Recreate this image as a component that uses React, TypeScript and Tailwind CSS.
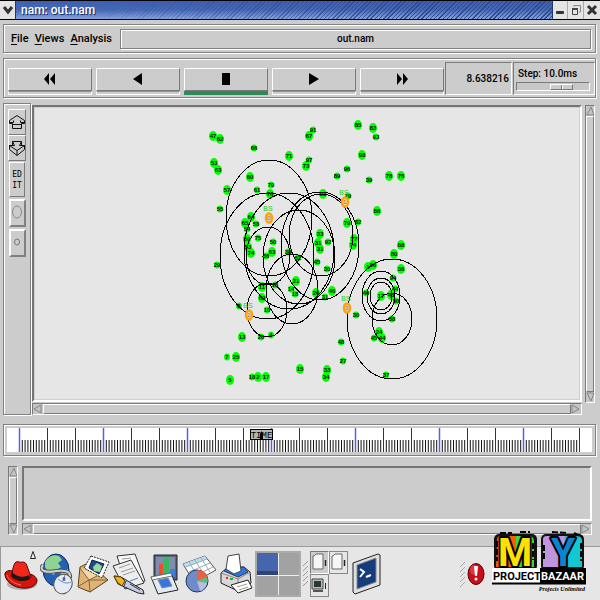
import React from 'react';
import { clsx } from 'clsx';

const groove = 'border border-[#808080] shadow-[inset_1px_1px_0_#fff,1px_1px_0_#fff]';
const raised = 'border border-t-white border-l-white border-b-[#7a7a7a] border-r-[#7a7a7a]';
const sunken = 'border border-t-[#7a7a7a] border-l-[#7a7a7a] border-b-white border-r-white';

type Node = [label: string, x: number, y: number, small?: boolean];

const NODES: Node[] = [
    ['47', 213, 136], ['62', 220, 139], ['66', 254, 148, true], ['91', 313, 130, true], ['67', 309, 136],
    ['71', 289, 156], ['53', 214, 163], ['63', 218, 170], ['97', 309, 160, true], ['73', 306, 166],
    ['60', 250, 177], ['61', 257, 190, true], ['70', 271, 185, true], ['76', 270, 194], ['57', 227, 190],
    ['55', 220, 209, true], ['64', 251, 217], ['65', 245, 223], ['54', 247, 229, true], ['58', 256, 224, true],
    ['75', 258, 238, true], ['59', 247, 239], ['53', 248, 247], ['50', 273, 242, true], ['93', 323, 194],
    ['33', 320, 234], ['31', 318, 243], ['92', 328, 242, true], ['31', 320, 249],
    ['85', 358, 125], ['83', 373, 128], ['93', 376, 137, true], ['98', 362, 155], ['96', 347, 169, true],
    ['89', 337, 176, true], ['39', 369, 180, true], ['78', 389, 176], ['76', 401, 176], ['86', 377, 211],
    ['79', 348, 196, true], ['79', 347, 223], ['82', 358, 222, true], ['77', 354, 239], ['74', 353, 245],
    ['88', 401, 245], ['74', 251, 253], ['36', 266, 256, true], ['63', 272, 252], ['38', 288, 252, true],
    ['52', 298, 258, true], ['45', 317, 262, true], ['30', 327, 269, true], ['29', 217, 265, true], ['11', 262, 287],
    ['16', 275, 285, true], ['21', 296, 281], ['14', 291, 289, true], ['18', 295, 294, true], ['69', 262, 298],
    ['10', 267, 310, true], ['8', 239, 306, true], ['26', 316, 293], ['31', 325, 297, true], ['46', 332, 291],
    ['13', 242, 337], ['20', 261, 337, true], ['4', 271, 335, true], ['7', 227, 357, true], ['25', 236, 357],
    ['5', 230, 380], ['18', 252, 377, true], ['2', 258, 377], ['17', 266, 377], ['15', 300, 369],
    ['33', 327, 370], ['34', 326, 377], ['80', 394, 254], ['36', 401, 269], ['1', 368, 267],
    ['56', 373, 265], ['94', 393, 278, true], ['40', 366, 293, true], ['17', 381, 296], ['44', 395, 289, true],
    ['48', 391, 295], ['50', 396, 301, true], ['38', 392, 319, true], ['45', 374, 338, true], ['24', 379, 332],
    ['44', 382, 338], ['30', 356, 315, true], ['48', 341, 342, true], ['27', 343, 361, true], ['37', 386, 375, true],
];

// cx, cy, rx, ry
const RANGES = [
    [269, 218, 43, 58], [267, 256, 47, 63], [289, 251, 45, 58], [299, 257, 36, 47], [320, 246, 39, 54],
    [321, 235, 32, 41], [268, 256, 22, 29], [267, 310, 20, 27], [292, 289, 26, 35], [392, 319, 45, 60],
    [392, 319, 20, 26], [381, 296, 19, 25], [381, 296, 14, 18], [381, 296, 11, 14],
];

const STATIONS = [
    ['0', 269, 218], ['1', 345, 202], ['2', 249, 315], ['3', 347, 308],
] as const;

const Network = () => (
    <svg viewBox="35 108 544 291" className="block h-[291px] w-full font-['Liberation_Sans',sans-serif]" role="img" aria-label="Network topology">
        {NODES.map(([label, x, y, small], i) => (
            <ellipse key={label + i} cx={x} cy={y} rx={small ? 3 : 4} ry={small ? 3.5 : 5} fill="#00ff00" />
        ))}
        <g fill="none" stroke="#000" shapeRendering="crispEdges">
            {RANGES.map(([cx, cy, rx, ry], i) => (
                <ellipse key={i} cx={cx} cy={cy} rx={rx} ry={ry} />
            ))}
        </g>
        {NODES.map(([label, x, y], i) => (
            <text key={label + i} x={x} y={y + 2} textAnchor="middle" fontSize="6" fontWeight="700" fill="#001a00">{label}</text>
        ))}
        {STATIONS.map(([label, x, y]) => (
            <g key={label} textAnchor="middle">
                <ellipse cx={x} cy={y} rx="3" ry="4.5" fill="#e6dcc8" stroke="#ffa010" strokeWidth="2.5" />
                <text x={x} y={y + 2} fontSize="6" fill="#c06000">{label}</text>
                <text x={x - 1} y={y - 7} fontSize="7" fill="#22cc22">BS</text>
            </g>
        ))}
    </svg>
);

const Ruler = () => (
    <svg viewBox="7 428 585 24" className="block h-6 w-full bg-white" role="img" aria-label="Time line">
        {Array.from({ length: 199 }, (_, i) => (
            <path key={i} d={`M${22.3 + i * 2.8} 440v12`} stroke="#111" strokeWidth="1" />
        ))}
        {Array.from({ length: 21 }, (_, i) => (
            <path key={i} d={`M${19.5 + i * 28} 428v24`} stroke={i % 3 ? '#1c1cff' : '#5858ff'} strokeWidth={i % 3 ? 1 : 1.5} />
        ))}
        <rect x="250.5" y="429.5" width="22" height="10" fill="#b4b8b0" stroke="#000" />
        <path d="M260 440v-6l1.500-3 1.500 3v6z" />
        <text x="261.5" y="438" textAnchor="middle" fontSize="9" className="font-['Liberation_Mono',monospace]">TIME</text>
    </svg>
);

const Arrow = ({ d, label }: { d: string; label: string }) => (
    <button aria-label={label} className="flex size-2.5 shrink-0 items-center justify-center">
        <svg viewBox="0 0 10 10" className="size-2.5">
            <path d={d} fill="#c4c4c4" stroke="#858585" />
        </svg>
    </button>
);

const VScroll = ({ className }: { className?: string }) => (
    <div className={clsx('flex w-[10px] shrink-0 flex-col bg-[#c4c4c4]', sunken, className)}>
        <Arrow label="Scroll up" d="M5 1l3 8H1z" />
        <div className={clsx('flex-1 bg-[#cccccc]', raised)} />
        <Arrow label="Scroll down" d="M1 1h7L5 9z" />
    </div>
);

const HScroll = () => (
    <div className={clsx('flex h-3 items-stretch bg-[#c4c4c4]', sunken)}>
        <Arrow label="Scroll left" d="M8 1v8L1 5z" />
        <div className={clsx('flex-1 bg-[#cccccc]', raised)} />
        <Arrow label="Scroll right" d="M1 1v8l7-4z" />
    </div>
);

const TRANSPORT = [
    { label: 'Rewind', d: 'M5 0v12L0 6zM11 0v12L6 6z' },
    { label: 'Play backward', d: 'M10 0v12L1 6z' },
    { label: 'Stop', d: 'M2 0h8v12H2z' },
    { label: 'Play forward', d: 'M1 0v12l10-6z' },
    { label: 'Fast forward', d: 'M1 0v12l5-6zM7 0v12l5-6z' },
];

const TitleBar = () => (
    <header className="flex h-5 border-y border-black bg-[#e4e4e4]">
        <button aria-label="Window menu" className="flex w-4 items-center justify-center border-r border-[#1f3770]">
            <svg viewBox="0 0 12 12" className="size-3"><path d="M2 3l4 5 4-5" fill="none" stroke="#333" strokeWidth="3" /></svg>
        </button>
        <div className="relative flex flex-1 items-center bg-linear-to-b from-[#3d60b4] via-[#4868b4] to-[#86a4e2] pl-[5px]">
            <div className="absolute inset-0 mask-[linear-gradient(to_right,transparent_10%,#000_75%)] bg-[repeating-linear-gradient(135deg,transparent_0_2px,#2c4a90_2px_3px)]" />
            <h1 className="relative text-[12px] leading-4 font-medium text-white [text-shadow:1px_1px_0_#1c2f60]">nam: out.nam</h1>
        </div>
        <div className="flex divide-x divide-[#aaa] border-l border-[#1f3770]">
            <button aria-label="Minimize" className="flex w-[15px] items-center justify-center">
                <svg viewBox="0 0 12 12" className="size-3"><rect x="2" y="7" width="8" height="3" rx="1" fill="#333" /></svg>
            </button>
            <button aria-label="Restore" className="flex w-4 items-center justify-center">
                <svg viewBox="0 0 12 12" className="size-3" fill="none" stroke="#444"><path d="M4 3V1.500h6.500V8H9" stroke="#888" /><path d="M2.500 4.500h5v6h-5z" /><path d="M2 5h6" strokeWidth="2" /></svg>
            </button>
            <button aria-label="Close" className="flex w-4 items-center justify-center">
                <svg viewBox="0 0 12 12" className="size-3"><path d="M2 2l8 8M10 2l-8 8" stroke="#333" strokeWidth="3" /></svg>
            </button>
        </div>
    </header>
);

const MenuBar = () => (
    <nav className={clsx('flex h-[29px] items-center gap-2 py-1 pr-1 pl-[7px]', groove)}>
        <div className="flex w-[101px] shrink-0 justify-between">
            {['File', 'Views', 'Analysis'].map((name) => (
                <button key={name} className="text-[11px] leading-4 font-medium">
                    <span className="underline underline-offset-2">{name[0]}</span>{name.slice(1)}
                </button>
            ))}
        </div>
        <div className={clsx('flex h-5 flex-1 items-center justify-center text-[10px] font-medium', groove)}>out.nam</div>
    </nav>
);

const Toolbar = () => (
    <section className={clsx('flex h-10 items-stretch pl-1', groove)}>
        <div className="flex flex-1 gap-1 pt-[6px]">
            {TRANSPORT.map(({ label, d }) => (
                <button key={label} aria-label={label} className="flex-1">
                    <span className={clsx('flex h-[23px] items-center justify-center', raised)}>
                        <svg viewBox="0 0 12 12" className="size-3"><path d={d} /></svg>
                    </span>
                    <span className={clsx('block h-1 border', label === 'Stop' ? 'border-[#2e8b57] bg-[#2e8b57]' : 'border-t-[#909090] border-r-white border-b-white border-l-white')} />
                </button>
            ))}
        </div>
        <output className={clsx('mt-[3px] mb-[2px] ml-px flex w-[67px] items-center justify-end pr-[2px] text-[10px] font-medium', sunken)}>8.638216</output>
        <div className={clsx('mt-[3px] mb-[2px] ml-px w-[82px] pt-[3px] pr-1 pl-[2px]', sunken)}>
            <label htmlFor="step" className="block pl-[2px] text-[10px] leading-4 font-medium">Step: 10.0ms</label>
            <input
                id="step"
                type="range"
                defaultValue={67}
                className={clsx(
                    'block h-[9px] w-full appearance-none bg-[#c8c8c8] [&::-webkit-slider-thumb]:h-[6px] [&::-webkit-slider-thumb]:w-[23px] [&::-webkit-slider-thumb]:appearance-none [&::-webkit-slider-thumb]:border [&::-webkit-slider-thumb]:border-t-white [&::-webkit-slider-thumb]:border-r-[#777] [&::-webkit-slider-thumb]:border-b-[#777] [&::-webkit-slider-thumb]:border-l-white [&::-webkit-slider-thumb]:bg-[linear-gradient(90deg,#ccc_10px,#777_10px_11px,#fff_11px_12px,#ccc_12px)]',
                    sunken
                )}
            />
        </div>
    </section>
);

const SideBar = () => (
    <aside className={clsx('flex w-[28px] shrink-0 flex-col items-center pt-[5px]', groove)}>
        <button aria-label="Zoom in" className={clsx('h-[26px] w-[18px]', raised)}>
            <svg viewBox="0 0 16 24" className="h-6 w-4" fill="none" stroke="#111"><path d="M8 5.500L.5 10.500v3h3v5h9v-5h3v-3zM.5 12.500h4v-2M15.500 12.500h-4v-2M3.500 14.500h9" /></svg>
        </button>
        <button aria-label="Zoom out" className={clsx('h-[26px] w-[18px]', raised)}>
            <svg viewBox="0 0 16 24" className="h-6 w-4" fill="none" stroke="#111"><path d="M3.500 5.500h9v4h3v4L8 19.500.5 13.500v-4h3zM3.500 5.500l2 4H.5l7.500 5 7.500-5h-5l2-4M8 14.500v5" /></svg>
        </button>
        <button className={clsx("mt-px h-[35px] w-4 font-['DejaVu_Sans_Mono',monospace] text-[8px] leading-[11px]", raised)}>ED<br />IT</button>
        <button aria-label="Larger nodes" className="mt-[2px] h-7 w-[17px] border-2 border-t-white border-r-[#808080] border-b-[#808080] border-l-white">
            <svg viewBox="0 0 13 24" className="h-6 w-[13px]"><ellipse cx="6" cy="11" rx="4.500" ry="6" fill="none" stroke="#888" /></svg>
        </button>
        <button aria-label="Smaller nodes" className="mt-[2px] h-7 w-[17px] border-2 border-t-white border-r-[#808080] border-b-[#808080] border-l-white">
            <svg viewBox="0 0 13 24" className="h-6 w-[13px]"><ellipse cx="6" cy="11" rx="2.500" ry="3" fill="none" stroke="#777" /></svg>
        </button>
    </aside>
);

const HatIcon = () => (
    <svg viewBox="0 0 34 34" className="size-[34px]">
        <ellipse cx="18" cy="27" rx="15" ry="6" fill="#777" opacity=".5" />
        <path d="M1 16c-1 6 6 14 17 15 9 1 15-3 15-8-1-4-5-6-9-6L9 14c-4-1-7 0-8 2z" fill="#d8140c" stroke="#4a0000" />
        <path d="M7 19c2-5 2-12 5-14 3-1 4 1 6 0 3 0 4 1 5 4l4 11c-4 5-16 5-20-1z" fill="#f0281c" stroke="#6a0000" />
        <path d="M8 15c4 5 12 6 17 3l1 4c-5 3-14 2-19-3z" fill="#181818" />
        <path d="M3 18c1 5 8 9 14 10" fill="none" stroke="#ff7a6a" />
    </svg>
);

const GlobeIcon = () => (
    <svg viewBox="0 0 34 42" className="h-[42px] w-[34px]">
        <ellipse cx="16" cy="17" rx="13" ry="16" fill="#2261b4" stroke="#0b2a5e" />
        <path d="M5 9c3-6 9-8 14-6l3 4-4 3 3 4-5 3-2 5-5-2-4-6zM22 19l6-3c0 6-2 9-5 12l-4-5z" fill="#8fd394" />
        <path d="M3 12c-5 6 4 8 13 6 9-1 15 0 14 7" fill="none" stroke="#555" strokeWidth="4" />
        <path d="M3 12c-5 6 4 8 13 6 9-1 15 0 14 7" fill="none" stroke="#d0d0d0" strokeWidth="2" />
        <ellipse cx="23" cy="31" rx="9" ry="10" fill="#e6eaf5" stroke="#555" transform="rotate(24 23 31)" />
        <path d="M18 26c5 4 9 5 13 3M25 22l-2 6" fill="none" stroke="#7a86a6" />
        <ellipse cx="24" cy="26" rx="1.500" ry="2" fill="#4668b0" />
    </svg>
);

const MailIcon = () => (
    <svg viewBox="0 0 34 40" className="h-10 w-[34px]">
        <path d="M4 13l8-4 20 17-18 12L2 33z" fill="#dcb478" stroke="#5a4010" />
        <path d="M3 32l10-6 18 0M14 38l-1-12" fill="none" stroke="#8a6428" />
        <path d="M4 14l9 12 10-5" fill="#f2d8a8" stroke="#8a6428" />
        <path d="M15 2l18 6-7 16L8 14z" fill="#fff" stroke="#222" strokeDasharray="2 1" />
        <path d="M16 6l12 4-5 10-10-6z" fill="#1c4c88" stroke="#0a2448" />
        <path d="M21 9l5 3-2 6-6-1-1-4z" fill="#98d8a0" />
    </svg>
);

const WriterIcon = () => (
    <svg viewBox="0 0 36 42" className="h-[42px] w-9">
        <path d="M5 3l18-2 10 27-19 3z" fill="#f8f8f8" stroke="#333" />
        <path d="M1 13l18-6 13 23-19 6z" fill="#eee" stroke="#333" />
        <path d="M7 15l11-4M9 19l12-4M11 22l12-4M10 6l9-1" stroke="#999" />
        <path d="M18 28l8-3" stroke="#5a78c8" />
        <path d="M2 23l7 1 22 13 1 4-6-1L6 31z" fill="#c8cce0" stroke="#222" />
        <path d="M2 23l7 1 4 4-3 5-5-4z" fill="#f0b418" stroke="#553c00" />
        <path d="M14 28l-2 5M18 31l10 6" stroke="#334" />
    </svg>
);

const ImpressIcon = () => (
    <svg viewBox="0 0 30 42" className="h-[42px] w-[30px]">
        <path d="M4 2h23v25H4z" fill="#5a6484" stroke="#222" />
        <path d="M6 4h19v20H6z" fill="#7f8cae" />
        <path d="M9 11h4v12H9z" fill="#f04c28" /><path d="M14 5h5v18h-5z" fill="#35b860" /><path d="M20 16h5v8h-5z" fill="#3a80e0" />
        <path d="M1 24l20-4 7 17-20 4z" fill="#e4e8f0" stroke="#222" />
        <path d="M8 27l10-2 4 8-10 2z" fill="#2e78e0" stroke="#88a" />
        <path d="M1 24l20-4 1 3-20 4z" fill="#fff" stroke="#777" />
    </svg>
);

const CalcIcon = () => (
    <svg viewBox="0 0 35 40" className="h-10 w-[35px]">
        <path d="M1 10l22-8 11 14-22 12z" fill="#fff" stroke="#555" />
        <path d="M1 10l22-8 2 3L4 13z" fill="#b8dcf0" />
        <path d="M4 13l21-8M7 18l21-9M10 23l21-10M7 8l9 15M13 6l9 15M19 4l9 14" stroke="#9aabb8" fill="none" />
        <ellipse cx="15" cy="27" rx="11" ry="11" fill="#6e8cc8" stroke="#223860" />
        <path d="M15 27V16c6 0 9 3 10 7z" fill="#f06040" /><path d="M15 27l10-4c1 2 1 4 0 6z" fill="#58c070" />
        <path d="M15 27l10 2c-1 4-4 8-7 8z" fill="#b8bce0" />
    </svg>
);

const PrinterIcon = () => (
    <svg viewBox="0 0 34 42" className="h-[42px] w-[34px]">
        <path d="M2 20l6-5 17-1 6 5 1 11-11 9-19-9z" fill="#d8d8d8" stroke="#222" />
        <path d="M5 18l3-3 17-1 4 5-10 5z" fill="#2878e8" stroke="#335" />
        <path d="M9 3l11-2 2 17-7 3-8-5z" fill="#fff" stroke="#444" />
        <path d="M2 20l17 6 12-7M19 26v11" fill="none" stroke="#888" />
        <path d="M12 32l17-5 4 8-14 5z" fill="#fff" stroke="#222" />
        <path d="M18 34l10-3M20 37l9-3" stroke="#999" /><path d="M11 26h3" stroke="#2a2" strokeWidth="2" /><path d="M7 25h2" stroke="#e22" strokeWidth="2" />
    </svg>
);

const Grip = () => (
    <svg viewBox="0 0 5 44" className="h-11 w-[5px] shrink-0">
        {[8, 13, 18, 23, 28].map((y) => <path key={y} d={`M0 ${y + 6}l5-5`} stroke="#999" />)}
    </svg>
);

const PageIcon = () => (
    <svg viewBox="0 0 16 20" className="h-5 w-4">
        <path d="M3 4l2-2h7v15H2V4z" fill="#f6f6f6" stroke="#666" /><path d="M14.500 8v6" stroke="#222" strokeWidth="1.500" />
    </svg>
);

const APPS = [
    { label: 'Main menu', Icon: HatIcon }, { label: 'Web browser', Icon: GlobeIcon }, { label: 'Email', Icon: MailIcon },
    { label: 'Writer', Icon: WriterIcon }, { label: 'Impress', Icon: ImpressIcon }, { label: 'Calc', Icon: CalcIcon },
    { label: 'Print manager', Icon: PrinterIcon },
];

const Logo = () => (
    <svg viewBox="0 0 96 64" className="absolute right-3 bottom-[5px] z-10 h-16 w-24 overflow-visible font-[Roboto,sans-serif] font-bold" role="img" aria-label="My Project Bazaar, Projects Unlimited">
        <rect x="2" y="3" width="43" height="37" rx="5" fill="#111" />
        <rect x="49" y="3" width="43" height="37" rx="5" fill="#111" />
        <path d="M5 8q0-3 4-3h15v31H4z" fill="#ff5a00" /><path d="M24 5h12q6 0 6 5v26H24z" fill="#3ad83a" />
        <path d="M51 8q0-3 4-3h18v31H51z" fill="#bf95e0" /><path d="M73 5h12q5 0 5 5v26H70z" fill="#10c8d0" />
        <path d="M5 10v20M89 12v18M41 12v17M52 14v15M8 2h12M28 1h10M60 1l16 1M82 2l8 4" stroke="#000" strokeWidth="2" strokeDasharray="6 2" fill="none" />
        <g fontSize="39" textAnchor="middle" stroke="#000" strokeWidth="4" paintOrder="stroke" strokeLinejoin="round">
            <text x="23" y="35" fill="#ffe000">M</text>
            <text x="71" y="35" fill="#0a84d0">Y</text>
        </g>
        <rect x="0" y="37" width="48" height="15" fill="#fff" /><rect x="48" y="37" width="46" height="16" fill="#000" />
        <path d="M0 52.500h94" stroke="#000" strokeWidth="2" />
        <text x="1" y="49" fontSize="11">PROJECT</text>
        <text x="92" y="49" fontSize="11" textAnchor="end" fill="#fff">BAZAAR</text>
        <text x="93" y="60" fontSize="6" textAnchor="end" fontStyle="italic" className="font-['Liberation_Serif',serif]">Projects Unlimited</text>
    </svg>
);

const TaskBar = () => (
    <footer className="relative flex h-[54px] items-center border-t border-l border-[#999] bg-[#e6e6e6] pr-[13px] pl-[3px]">
        <div className="flex items-center gap-[2px]">
            {APPS.map(({ label, Icon }) => <button key={label} aria-label={label}><Icon /></button>)}
        </div>
        <svg viewBox="0 0 8 8" className="absolute top-1 left-7 size-2"><path d="M4 .5L1.500 7.500h5z" fill="#eee" stroke="#222" /></svg>
        <div className="ml-[2px] grid h-[46px] w-[46px] shrink-0 grid-cols-2 gap-px border-2 border-[#aaa] bg-[#eee]">
            <button aria-label="Workspace 1" className="border-b-4 border-[#2f4474] bg-[#4565ad]" />
            <button aria-label="Workspace 2" className="bg-[#a2a2a2]" />
            <button aria-label="Workspace 3" className="bg-[#a2a2a2]" />
            <button aria-label="Workspace 4" className="bg-[#a2a2a2]" />
        </div>
        <div className="ml-[2px]"><Grip /></div>
        <div className="ml-[2px] grid shrink-0 grid-cols-2">
            <button aria-label="Window 1" className={clsx('h-[23px] w-[19px] bg-[#ccc]', sunken)}><PageIcon /></button>
            <button aria-label="Window 2" className="h-[23px] w-[19px] border border-[#888]"><PageIcon /></button>
            <button aria-label="Window 3" className="h-[23px] w-[19px] border border-[#888]">
                <svg viewBox="0 0 16 20" className="h-5 w-4"><path d="M1 4h11v10H1z" fill="#bbb" stroke="#444" /><path d="M3 6h7v6H3z" fill="#263a30" /><path d="M2 16h10" stroke="#555" strokeWidth="2" /><path d="M14.500 8v6" stroke="#222" /></svg>
            </button>
        </div>
        <button aria-label="Terminal" className="ml-1">
            <svg viewBox="0 0 30 42" className="h-[42px] w-[30px]">
                <path d="M1 10L26 1l2 1v30L3 41l-2-2z" fill="#e0e0e0" stroke="#222" />
                <path d="M5 12l19-7v24L5 36z" fill="#153c7c" stroke="#888" />
                <path d="M8 16l4 3-4 5M14 24l5-2" fill="none" stroke="#fff" strokeWidth="2" />
            </svg>
        </button>
        <div className="mr-[102px] ml-auto flex items-center gap-[2px]">
            <svg viewBox="0 0 5 26" className="h-[26px] w-[5px]">
                {[0, 5, 10, 15, 20].map((y) => <path key={y} d={`M0 ${y + 6}l5-5`} stroke="#aaa" />)}
            </svg>
            <button aria-label="Updates available">
                <svg viewBox="0 0 18 24" className="h-6 w-[18px]">
                    <ellipse cx="9" cy="12" rx="8" ry="10.500" fill="#c8101c" stroke="#5c0008" />
                    <ellipse cx="7" cy="8" rx="4" ry="5" fill="#f06060" opacity=".5" />
                    <path d="M7 4h4l-1 10H8z" fill="#fff" /><ellipse cx="9" cy="17" rx="1.500" ry="1.500" fill="#fff" />
                </svg>
            </button>
        </div>
        <Logo />
    </footer>
);

const App: React.FC = () => {
    return (
        <div className="min-h-screen bg-[#cccccc] font-[Roboto,sans-serif] text-black">
            <TitleBar />
            <main className="flex flex-col gap-[5px] pt-1 pr-1 pb-[11px] pl-[3px]">
                <MenuBar />
                <Toolbar />
                <div className="flex items-stretch gap-px">
                    <SideBar />
                    <div className="flex min-w-0 flex-1 flex-col gap-px pt-[2px]">
                        <div className="border-2 border-t-[#757575] border-r-white border-b-white border-l-[#757575]">
                            <div className="border border-[#d0d0d0] bg-[#e6e6e6]"><Network /></div>
                        </div>
                        <HScroll />
                    </div>
                    <VScroll className="mt-[2px] mr-px mb-[12px] ml-[2px]" />
                </div>
                <section className={clsx('mt-[4px] p-[3px]', groove)}><Ruler /></section>
                <section className="mt-[5px] flex gap-1 pr-1 pl-[5px]">
                    <VScroll />
                    <div className="flex flex-1 flex-col gap-[2px]">
                        <div className="h-[55px] border-2 border-t-[#757575] border-r-white border-b-white border-l-[#757575]" />
                        <HScroll />
                    </div>
                </section>
            </main>
            <TaskBar />
        </div>
    );
};

export default App;
